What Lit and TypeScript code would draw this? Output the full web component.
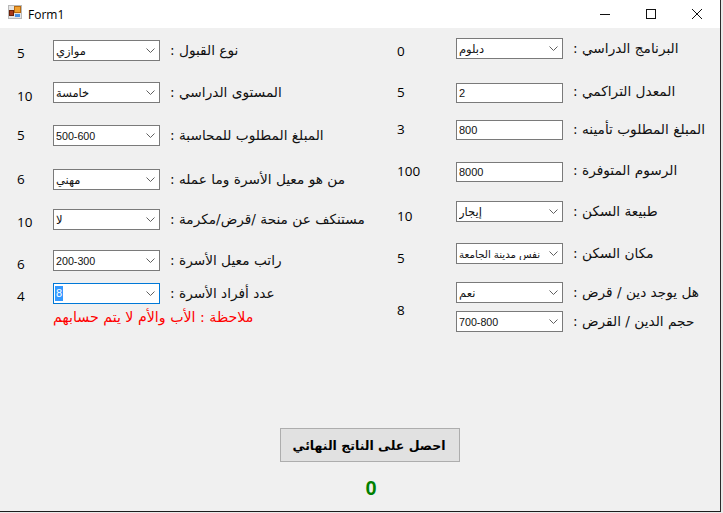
import { LitElement, html, css } from "lit";
import { customElement } from "lit/decorators.js";

const chevron = html`<svg class="chev" width="9" height="5" viewBox="0 0 9 5"><path d="M.5 .5l4 4 4-4" fill="none" stroke="#606060" stroke-width="1"/></svg>`;

type Row = { n: string; k: "s" | "t"; v: string; l: string; cls?: string; long?: boolean };

const left: Row[] = [
  { n: "5", k: "s", v: "موازي", l: "نوع القبول :", cls: "n7" },
  { n: "10", k: "s", v: "خامسة", l: "المستوى الدراسي :", cls: "n9" },
  { n: "5", k: "s", v: "500-600", l: "المبلغ المطلوب للمحاسبة :" },
  { n: "6", k: "s", v: "مهني", l: "من هو معيل الأسرة وما عمله :" },
  { n: "10", k: "s", v: "لا", l: "مستنكف عن منحة /قرض/مكرمة :", cls: "n7" },
  { n: "6", k: "s", v: "200-300", l: "راتب معيل الأسرة :", cls: "n9" },
];
const right: Row[] = [
  { n: "0", k: "s", v: "دبلوم", l: "البرنامج الدراسي :", cls: "n7" },
  { n: "5", k: "t", v: "2", l: "المعدل التراكمي :", cls: "l2" },
  { n: "3", k: "t", v: "800", l: "المبلغ المطلوب تأمينه :" },
  { n: "100", k: "t", v: "8000", l: "الرسوم المتوفرة :", cls: "l2" },
  { n: "10", k: "s", v: "إيجار", l: "طبيعة السكن :", cls: "n11" },
  { n: "5", k: "s", v: "نفس مدينة الجامعة", l: "مكان السكن :", cls: "n11", long: true },
];

@customElement("app-root")
export class AppRoot extends LitElement {
  static styles = css`
    :host { display: block; width: 723px; height: 513px; background: #e9e9e9; overflow: hidden;
      font-family: "Open Sans", "DejaVu Sans", sans-serif; color: #111; }
    .win { width: 721px; height: 512px; box-sizing: border-box; border-right: 1px solid #2b2b2b;
      border-bottom: 1px solid #1c1c1c; background: #f0f0f0; display: flex; flex-direction: column; }
    .title { height: 28px; background: #fff; display: flex; align-items: center; flex: none; padding-left: 8px; }
    .title svg.icon { margin-top: -4px; }
    .title .name { font-size: 12px; margin-left: 6px; color: #000; flex: 1; }
    .wb { width: 46px; height: 28px; display: flex; align-items: center; justify-content: center; }
    .form { display: flex; flex: none; height: 400px; }
    .col { display: flex; flex-direction: column; }
    .c1 { width: 380px; padding: 12px 0 0 17px; box-sizing: border-box; }
    .c2 { width: 340px; padding: 10px 0 0 17px; box-sizing: border-box; }
    .row { display: grid; grid-template-rows: 21px; align-items: center; height: 21px; }
    .c1 .row { grid-template-columns: 36px 107px 1fr; }
    .c2 .row { grid-template-columns: 59px 107px 1fr; }
    .c1 .row:nth-child(2) { margin-top: 21px; }
    .c1 .row:nth-child(3) { margin-top: 22px; }
    .c1 .row:nth-child(4) { margin-top: 23px; }
    .c1 .row:nth-child(5) { margin-top: 19px; }
    .c1 .row:nth-child(6) { margin-top: 20px; }
    .c1 .row:nth-child(7) { margin-top: 12px; }
    .c2 .row:nth-child(2) { margin-top: 23px; }
    .c2 .row:nth-child(3) { margin-top: 16px; }
    .c2 .row:nth-child(4) { margin-top: 21px; }
    .c2 .row:nth-child(5) { margin-top: 19px; }
    .c2 .row:nth-child(6) { margin-top: 21px; }
    .num { font-size: 13.5px; line-height: 16px; color: #000; padding-bottom: 2px; }
    .n7 .num { padding-top: 7px; }
    .n9 .num { padding-top: 9px; }
    .n11 .num { padding-top: 11px; }
    .lab { font-family: "DejaVu Sans", sans-serif; font-size: 13.7px; line-height: 18px; white-space: nowrap;
      direction: rtl; justify-self: start; margin-left: 10px; color: #111; padding-bottom: 2px; }
    .l2 .lab { padding-bottom: 4px; }
    .box { height: 21px; box-sizing: border-box; border: 1px solid #7a7a7a; background: #fff;
      display: flex; align-items: center; padding-left: 2px; overflow: hidden; }
    .box .val { font-family: "Liberation Sans", "DejaVu Sans", sans-serif; font-size: 11.5px; flex: 1; white-space: nowrap;
      overflow: hidden; direction: rtl; text-align: left; width: 0; min-width: 0; color: #111; }
    .box.num-val .val { direction: ltr; font-size: 10.7px; }
    .box.long .val { font-size: 10.3px; }
    .box.long .chev { margin-left: 4px; }
    .box.t { height: 20px; }
    .box.t .val { direction: ltr; font-size: 11px; }
    .chev { flex: none; margin: 0 4px 0 8px; }
    .focus { border-color: #0078d7; }
    .sel { background: #3399ff; color: #fff; padding: 0 1px; font-family: "Liberation Sans", sans-serif; font-size: 11px; line-height: 15px; margin-left: -1px; }
    .note { font-family: "DejaVu Sans", sans-serif; color: #f00; font-size: 14.2px; line-height: 18px; direction: rtl;
      margin: 4px 0 0 36px; align-self: flex-start; white-space: nowrap; }
    .pair { display: grid; grid-template-columns: 59px 107px 1fr; margin-top: 18px; grid-template-rows: 21px 21px; row-gap: 8px; align-items: center; }
    .pair .num { grid-row: 1 / span 2; grid-column: 1; padding-top: 8px; }
    .pair .b1 { grid-row: 1; grid-column: 2; }
    .pair .b2 { grid-row: 2; grid-column: 2; }
    .pair .a1 { grid-row: 1; grid-column: 3; }
    .pair .a2 { grid-row: 2; grid-column: 3; }
    .bottom { display: flex; flex-direction: column; align-items: center; align-self: flex-start; margin-left: 280px; width: 180px; }
    .btn { width: 180px; height: 34px; box-sizing: border-box; background: #e1e1e1; border: 1px solid #adadad;
      font-family: "DejaVu Sans", sans-serif; font-weight: bold; font-size: 12.5px; color: #000; direction: rtl; display: flex; align-items: center; justify-content: center; padding: 0 2px 0 0; }
    .res { font-family: "Liberation Sans", sans-serif; font-weight: bold; font-size: 20px; color: #008000; line-height: 20px; margin: 16px 0 0 2px; }
  `;

  private box(r: Row, extra = "") {
    if (r.k === "t") return html`<div class="box t ${extra}"><span class="val">${r.v}</span></div>`;
    const numeric = /^[0-9-]+$/.test(r.v);
    return html`<div class="box ${extra} ${numeric ? "num-val" : ""} ${r.long ? "long" : ""}"><span class="val">${r.v}</span>${chevron}</div>`;
  }

  private row(r: Row) {
    return html`<div class="row ${r.cls ?? ""}"><span class="num">${r.n}</span>${this.box(r)}<span class="lab">${r.l}</span></div>`;
  }

  render() {
    return html`<div class="win">
      <div class="title">
        <svg class="icon" width="14" height="14" viewBox="0 0 14 14">
          <rect x="0.5" y="0.5" width="13" height="13" fill="#e4e4e4" stroke="#b8b8b8"/>
          <rect x="6.5" y="1.5" width="6" height="6" fill="#f0a030" stroke="#b86a10"/>
          <rect x="1.5" y="5.5" width="4" height="5" fill="#a83818" stroke="#6a2008"/>
          <rect x="7" y="9" width="5" height="3" fill="#4a90e0"/>
        </svg>
        <span class="name">Form1</span>
        <span class="wb"><svg width="10" height="10" viewBox="0 0 10 10"><path d="M0 5.5h10" stroke="#111"/></svg></span>
        <span class="wb"><svg width="10" height="10" viewBox="0 0 10 10"><rect x=".5" y=".5" width="9" height="9" fill="none" stroke="#111"/></svg></span>
        <span class="wb"><svg width="10" height="10" viewBox="0 0 10 10"><path d="M0 0l10 10M10 0L0 10" stroke="#111"/></svg></span>
      </div>
      <div class="form">
        <div class="col c1">
          ${left.map((r) => this.row(r))}
          <div class="row n7">
            <span class="num">4</span>
            <div class="box focus"><span class="sel">8</span><span class="val"></span>${chevron}</div>
            <span class="lab">عدد أفراد الأسرة :</span>
          </div>
          <div class="note">ملاحظة : الأب والأم لا يتم حسابهم</div>
        </div>
        <div class="col c2">
          ${right.map((r) => this.row(r))}
          <div class="pair">
            <span class="num">8</span>
            ${this.box({ n: "", k: "s", v: "نعم", l: "" }, "b1")}
            <span class="lab a1">هل يوجد دين / قرض :</span>
            ${this.box({ n: "", k: "s", v: "700-800", l: "" }, "b2")}
            <span class="lab a2">حجم الدين / القرض :</span>
          </div>
        </div>
      </div>
      <div class="bottom">
        <button class="btn">احصل على الناتج النهائي</button>
        <span class="res">0</span>
      </div>
    </div>`;
  }
}
